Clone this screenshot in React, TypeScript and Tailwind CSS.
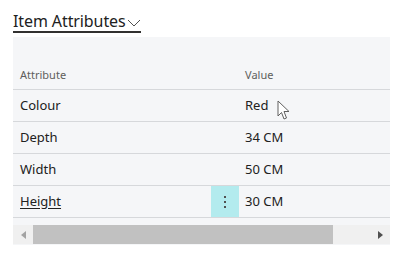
import React from 'react';

const rows = [
  { name: 'Colour', value: 'Red' },
  { name: 'Depth', value: '34 CM' },
  { name: 'Width', value: '50 CM' },
  { name: 'Height', value: '30 CM', active: true },
];

export default function App() {
  return (
    <div className="relative w-[399px] h-[253px] bg-white font-['Noto_Sans',sans-serif] text-[#212121]">
      <div className="pl-[13px] pt-[9px]">
        <div className="inline-flex items-center border-b-2 border-[#323130] h-[22px]">
          <span className="text-[16px] leading-[20px] tracking-[-0.1px] text-[#212121]">Item Attributes</span>
          <svg width="14" height="10" viewBox="0 0 14 10" className="ml-[1px] mt-[3px]">
            <path d="M1 2 L7 8 L13 2" fill="none" stroke="#505050" strokeWidth="1" />
          </svg>
        </div>
      </div>

      <div className="ml-[13px] mt-[4px] w-[377px] bg-[#f5f6f8]">
        <div className="flex h-[53px] items-end pb-[6px] border-b border-[#d6d8db] text-[11px] text-[#605e5c]">
          <div className="w-[232px] pl-[7px]">Attribute</div>
          <div>Value</div>
        </div>
        {rows.map((r) => (
          <div key={r.name} className="flex h-[32px] items-center border-b border-[#d6d8db] text-[13px]">
            <div className={`w-[198px] pl-[7px] ${r.active ? 'underline underline-offset-2' : ''}`}>{r.name}</div>
            <div className={`w-[28px] h-full flex items-center justify-center ${r.active ? 'bg-[#b3ebee]' : ''}`}>
              {r.active && (
                <svg width="4" height="14" viewBox="0 0 4 14">
                  <rect x="1" y="1" width="2" height="2" fill="#505050" />
                  <rect x="1" y="6" width="2" height="2" fill="#505050" />
                  <rect x="1" y="11" width="2" height="2" fill="#505050" />
                </svg>
              )}
            </div>
            <div className="pl-[6px]">{r.value}</div>
          </div>
        ))}
        <div className="flex items-center h-[27px] pt-[6px]">
          <div className="h-[19px] w-full bg-[#f0f0f0] flex items-center">
            <div className="w-[20px] flex justify-center">
              <svg width="5" height="8" viewBox="0 0 5 8"><path d="M5 0 L0 4 L5 8 Z" fill="#a3a3a3" /></svg>
            </div>
            <div className="w-[300px] h-full bg-[#c1c1c1]" />
            <div className="flex-1" />
            <div className="w-[20px] flex justify-center">
              <svg width="5" height="8" viewBox="0 0 5 8"><path d="M0 0 L5 4 L0 8 Z" fill="#505050" /></svg>
            </div>
          </div>
        </div>
      </div>

      <svg className="absolute left-[277px] top-[100px]" width="14" height="21" viewBox="0 0 14 21">
        <path d="M1 1 L1 16 L4.5 12.5 L7 19 L9.5 18 L7 11.5 L12 11.5 Z" fill="#ffffff" stroke="#606060" strokeWidth="1" strokeLinejoin="round" />
      </svg>
    </div>
  );
}
